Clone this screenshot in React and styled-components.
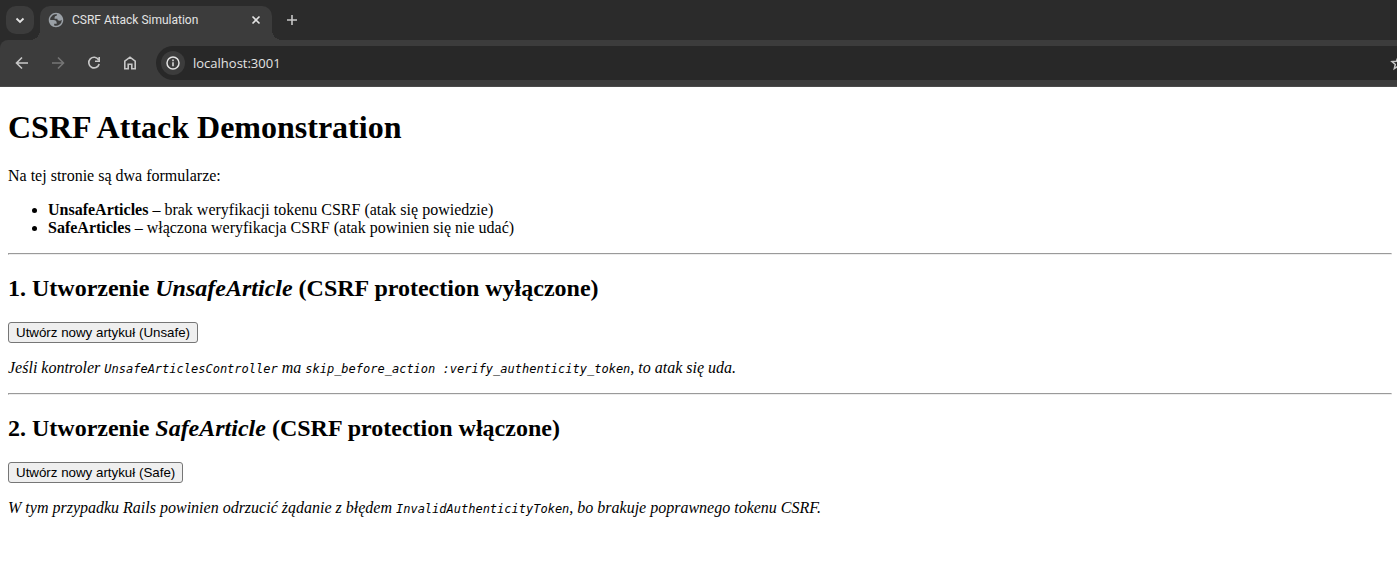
import React from "react";
import styled, { createGlobalStyle } from "styled-components";

const GlobalStyle = createGlobalStyle`
  body {
    margin: 0;
    background: #ffffff;
    color: #000000;
    font: 16px/18px "Liberation Serif", "Times New Roman", serif;
  }
`;

const chrome = {
  strip: "#2b2b2b",
  surface: "#3c3c3c",
  field: "#282828",
  text: "#e3e3e3",
  icon: "#c7c7c7",
};

const TabStrip = styled.div`
  display: flex;
  align-items: flex-start;
  box-sizing: border-box;
  height: 40px;
  padding: 6px 6px 0;
  background: ${chrome.strip};
`;

const IconButton = styled.button`
  display: flex;
  flex: none;
  align-items: center;
  justify-content: center;
  width: ${(p) => p.$size || 28}px;
  height: ${(p) => p.$size || 28}px;
  padding: 0;
  border: 0;
  border-radius: ${(p) => p.$radius || "50%"};
  background: ${(p) => p.$fill || "transparent"};
  color: ${(p) => p.$color || chrome.icon};
`;

const Tab = styled.div`
  position: relative;
  display: flex;
  align-items: center;
  box-sizing: border-box;
  width: 232px;
  height: 34px;
  margin: 0 6px;
  padding: 0 6px 6px 8px;
  border-radius: 10px 10px 0 0;
  background: ${chrome.surface};
  color: ${chrome.text};

  &::before,
  &::after {
    content: "";
    position: absolute;
    bottom: 0;
    width: 10px;
    height: 10px;
  }
  &::before {
    right: 100%;
    background: radial-gradient(circle at 0 0, transparent 10px, ${chrome.surface} 10px);
  }
  &::after {
    left: 100%;
    background: radial-gradient(circle at 100% 0, transparent 10px, ${chrome.surface} 10px);
  }
`;

const TabTitle = styled.span`
  flex: 1;
  margin-left: 8px;
  font: 12px/18px Roboto, "Segoe UI", sans-serif;
  white-space: nowrap;
`;

const ToolbarBack = styled.div`
  background: ${chrome.strip};
`;

const Toolbar = styled.div`
  display: flex;
  align-items: center;
  gap: 8px;
  box-sizing: border-box;
  height: 47px;
  padding: 0 0 1px 8px;
  border-bottom: 1px solid #4a4a4a;
  border-radius: 8px 0 0 0;
  background: ${chrome.surface};
  overflow: hidden;
`;

const AddressBar = styled.div`
  display: flex;
  flex: 1;
  align-items: center;
  box-sizing: border-box;
  min-width: 0;
  height: 34px;
  margin-left: 4px;
  padding-left: 5px;
  border-radius: 17px 0 0 17px;
  background: ${chrome.field};
  overflow: hidden;
`;

const AddressInput = styled.input`
  flex: 1;
  min-width: 0;
  margin: 0 0 0 8px;
  padding: 0;
  border: 0;
  outline: 0;
  background: transparent;
  color: ${chrome.text};
  font: 13px/20px "Open Sans", "Segoe UI", sans-serif;
`;

const StarSlot = styled(IconButton)`
  margin-right: -15px;
`;

const Page = styled.main`
  padding: 0 5px 0 8px;
  overflow: hidden;
`;

const Title = styled.h1`
  margin: 21px 0;
  font-size: 32px;
  line-height: 38px;
`;

const Heading = styled.h2`
  margin: 20px 0;
  font-size: 24px;
  line-height: 27px;
`;

const Text = styled.p`
  margin: 16px 0;
`;

const Note = styled(Text)`
  font-style: italic;
`;

const List = styled.ul`
  margin: 16px 0;
  padding-left: 40px;
`;

const Rule = styled.hr`
  margin: 16px 0;
  border: 1px solid;
  border-color: #9a9a9a #eeeeee #eeeeee #9a9a9a;
`;

const Code = styled.code`
  font-family: "DejaVu Sans Mono", monospace;
  font-size: 12px;
  line-height: 14px;
`;

const SubmitButton = styled.button`
  display: block;
  height: 21px;
  padding: 0 7px;
  border: 1px solid #767676;
  border-radius: 3px;
  background: #efefef;
  color: #000000;
  font-family: "Liberation Sans", Arial, sans-serif;
`;

const Icon = ({ width = 1.6, children }) => (
  <svg
    width="16"
    height="16"
    viewBox="0 0 16 16"
    fill="none"
    stroke="currentColor"
    strokeWidth={width}
    aria-hidden="true"
  >
    {children}
  </svg>
);

const Globe = () => (
  <svg width="16" height="16" viewBox="1 1 22 22" aria-hidden="true">
    <path
      fill="#9aa0a6"
      fillRule="evenodd"
      d="M12 2C6.480 2 2 6.480 2 12s4.480 10 10 10 10-4.480 10-10S17.520 2 12 2zM4 12h4.400c3.407.022 4.922 1.730 4.543 5.127H9.488v2.470a8.004 8.004 0 0 0 10.498-8.083C19.327 12.504 18.332 13 17 13c-2.137 0-3.206-.916-3.206-2.750h-3.748c-.274-2.728.683-4.092 2.870-4.092 0-.975.327-1.597.811-1.970A8.004 8.004 0 0 0 4 12z"
    />
  </svg>
);

export default function App() {
  return (
    <>
      <GlobalStyle />
      <header>
        <TabStrip>
          <IconButton aria-label="Search tabs" $radius="10px" $fill={chrome.surface} $color={chrome.text}>
            <Icon width={1.8}>
              <path d="m4.500 6.500 3.500 3.500 3.500-3.500" />
            </Icon>
          </IconButton>
          <Tab>
            <Globe />
            <TabTitle>CSRF Attack Simulation</TabTitle>
            <IconButton aria-label="Close tab" $size={20} $color={chrome.text}>
              <Icon>
                <path d="m4.500 4.500 7 7m0-7-7 7" />
              </Icon>
            </IconButton>
          </Tab>
          <IconButton aria-label="New tab">
            <Icon>
              <path d="M8 3v10M3 8h10" />
            </Icon>
          </IconButton>
        </TabStrip>
        <ToolbarBack>
          <Toolbar>
            <IconButton aria-label="Back">
              <Icon>
                <path d="M14 8H3M8 2.500 2.500 8 8 13.500" />
              </Icon>
            </IconButton>
            <IconButton aria-label="Forward" $color="#757575">
              <Icon>
                <path d="M2 8h11M8 2.500 13.500 8 8 13.500" />
              </Icon>
            </IconButton>
            <IconButton aria-label="Reload">
              <Icon>
                <path d="M12.600 4.800A5.300 5.300 0 1 0 13.200 9M13.200 2v4.200H9" />
              </Icon>
            </IconButton>
            <IconButton aria-label="Home">
              <Icon>
                <path d="M2.800 6.200 8 2.200l5.200 4v7.600H9.800V9.200H6.200v4.600H2.800Z" />
              </Icon>
            </IconButton>
            <AddressBar>
              <IconButton aria-label="View site information" $size={24} $fill={chrome.surface} $color={chrome.text}>
                <Icon width={1.5}>
                  <circle cx="8" cy="8" r="6" />
                  <path d="M8 7.200v4M8 4.600v1.600" />
                </Icon>
              </IconButton>
              <AddressInput aria-label="Address" defaultValue="localhost:3001" />
              <StarSlot aria-label="Bookmark this page">
                <Icon width={1.5}>
                  <path d="m8 2.200 1.700 4 4.300.4-3.300 2.800 1 4.200L8 11.400l-3.700 2.200 1-4.200L2 6.600l4.300-.4Z" />
                </Icon>
              </StarSlot>
            </AddressBar>
          </Toolbar>
        </ToolbarBack>
      </header>
      <Page>
        <Title>CSRF Attack Demonstration</Title>
        <Text>Na tej stronie są dwa formularze:</Text>
        <List>
          <li><strong>UnsafeArticles</strong> – brak weryfikacji tokenu CSRF (atak się powiedzie)</li>
          <li><strong>SafeArticles</strong> – włączona weryfikacja CSRF (atak powinien się nie udać)</li>
        </List>
        <Rule />
        <Heading>1. Utworzenie <em>UnsafeArticle</em> (CSRF protection wyłączone)</Heading>
        <SubmitButton type="button">Utwórz nowy artykuł (Unsafe)</SubmitButton>
        <Note>
          Jeśli kontroler <Code>UnsafeArticlesController</Code> ma{" "}
          <Code>skip_before_action :verify_authenticity_token</Code>, to atak się uda.
        </Note>
        <Rule />
        <Heading>2. Utworzenie <em>SafeArticle</em> (CSRF protection włączone)</Heading>
        <SubmitButton type="button">Utwórz nowy artykuł (Safe)</SubmitButton>
        <Note>
          W tym przypadku Rails powinien odrzucić żądanie z błędem{" "}
          <Code>InvalidAuthenticityToken</Code>, bo brakuje poprawnego tokenu CSRF.
        </Note>
      </Page>
    </>
  );
}
